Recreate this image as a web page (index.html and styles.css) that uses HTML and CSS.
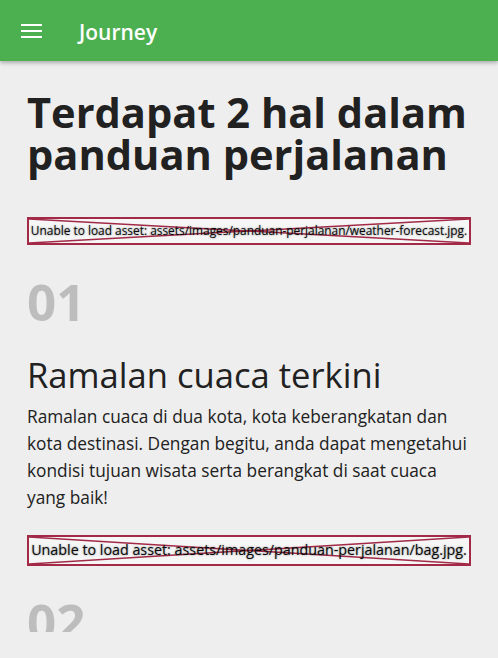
FILE: index.html
```html
<!DOCTYPE html>
<html lang="id">
<head>
<meta charset="utf-8">
<title>Journey</title>
<link rel="stylesheet" href="styles.css">
</head>
<body>
<header class="appbar">
  <svg class="menu" width="21" height="14" viewBox="0 0 21 14" aria-hidden="true">
    <rect x="0" y="0" width="21" height="2" fill="#fff"/>
    <rect x="0" y="6" width="21" height="2" fill="#fff"/>
    <rect x="0" y="12" width="21" height="2" fill="#fff"/>
  </svg>
  <span class="title">Journey</span>
</header>
<main class="content">
  <h1 class="headline">Terdapat 2 hal dalam panduan perjalanan</h1>

  <div class="asset asset-first">
    <svg class="asset-x" viewBox="0 0 100 100" preserveAspectRatio="none" aria-hidden="true">
      <line x1="0" y1="0" x2="100" y2="100"/>
      <line x1="0" y1="100" x2="100" y2="0"/>
    </svg>
    <span class="asset-text asset-text-sm">Unable to load asset: assets/images/panduan-perjalanan/weather-forecast.jpg.</span>
  </div>

  <div class="num num-first">01</div>
  <h2 class="subtitle">Ramalan cuaca terkini</h2>
  <p class="desc">Ramalan cuaca di dua kota, kota keberangkatan dan kota destinasi. Dengan begitu, anda dapat mengetahui kondisi tujuan wisata serta berangkat di saat cuaca yang baik!</p>

  <div class="asset asset-second">
    <svg class="asset-x" viewBox="0 0 100 100" preserveAspectRatio="none" aria-hidden="true">
      <line x1="0" y1="0" x2="100" y2="100"/>
      <line x1="0" y1="100" x2="100" y2="0"/>
    </svg>
    <span class="asset-text asset-text-lg">Unable to load asset: assets/images/panduan-perjalanan/bag.jpg.</span>
  </div>

  <div class="num num-second">02</div>
</main>
</body>
</html>
```

FILE: styles.css
```css
* { box-sizing: border-box; }

html, body {
  margin: 0;
  padding: 0;
  background: #eeeeee;
}

body {
  width: 498px;
  height: 658px;
  overflow: hidden;
  font-family: "Open Sans", "Noto Sans", sans-serif;
  color: #212121;
}

.appbar {
  position: relative;
  z-index: 2;
  height: 61px;
  background: #4caf50;
  display: flex;
  align-items: center;
  padding-left: 21px;
  box-shadow: 0 2px 4px rgba(0, 0, 0, 0.28);
}

.menu {
  display: block;
  margin-top: 1px;
}

.title {
  margin-left: 37px;
  margin-top: 3px;
  color: #ffffff;
  font-size: 21px;
  font-weight: 600;
  line-height: 1;
}

.content {
  height: 571px;
  overflow: hidden;
  padding: 30px 27px 0;
}

.headline {
  margin: 0;
  font-size: 41.6px;
  line-height: 42px;
  font-weight: 700;
  color: #212121;
}

.asset {
  position: relative;
  display: flex;
  align-items: center;
  justify-content: center;
  border: 2px solid #a22a47;
  background: rgba(255, 255, 255, 0.45);
  white-space: nowrap;
  overflow: hidden;
}

.asset-first {
  margin-top: 42px;
  height: 28px;
}

.asset-second {
  margin-top: 24px;
  height: 31px;
}

.asset-x {
  position: absolute;
  inset: 0;
  width: 100%;
  height: 100%;
}

.asset-x line {
  stroke: #a22a47;
  stroke-width: 1.5;
  vector-effect: non-scaling-stroke;
}

.asset-text {
  position: relative;
  color: #0a0a0a;
  text-shadow: 0 0 2px rgba(0, 0, 0, 0.5);
  line-height: 1;
}

.asset-text-sm { font-size: 11.9px; }
.asset-text-lg { font-size: 14.3px; }

.num {
  font-size: 51px;
  line-height: 51px;
  font-weight: 700;
  color: #bdbdbd;
}

.num-first { margin-top: 31px; }
.num-second { margin-top: 30px; }

.subtitle {
  margin: 27px 0 0;
  font-size: 34.6px;
  line-height: 41px;
  font-weight: 400;
  color: #212121;
}

.desc {
  margin: 8px 0 0;
  font-size: 17.3px;
  line-height: 27px;
  color: #212121;
}
```
